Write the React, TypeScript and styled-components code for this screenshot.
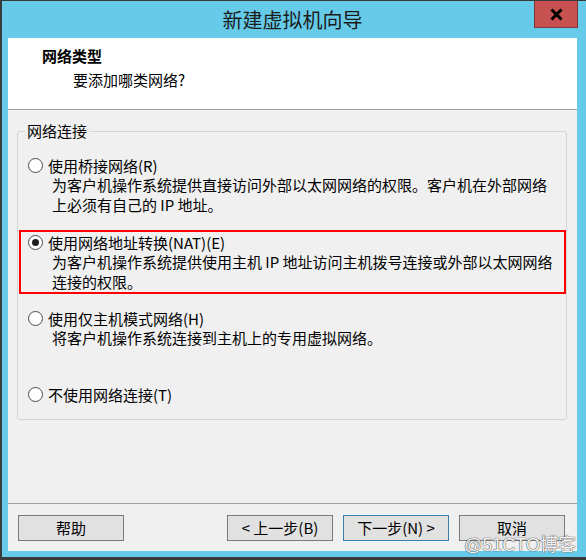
import styled, { createGlobalStyle } from 'styled-components';

const GlobalStyle = createGlobalStyle`
  html, body {
    margin: 0;
    padding: 0;
    background: #ffffff;
  }
  body {
    font-family: "Noto Sans CJK SC", "Microsoft YaHei", sans-serif;
  }
  * {
    box-sizing: border-box;
  }
`;

const Window = styled.div`
  position: relative;
  width: 586px;
  height: 560px;
  display: flex;
  flex-direction: column;
  background: #66cbe9;
  border-top: 1px solid #3a3a3a;
  border-left: 2px solid #3a3a3a;
  border-bottom: 3px solid #3a3a3a;
  padding: 0 9px 6px 6px;
`;

const TitleBar = styled.div`
  height: 37px;
  flex-shrink: 0;
  display: grid;
  grid-template-columns: 1fr auto 1fr;
  align-items: start;
`;

const Title = styled.div`
  grid-column: 2;
  font-size: 20px;
  line-height: 37px;
  color: #1b1b1b;
`;

const CloseButton = styled.div`
  grid-column: 3;
  justify-self: end;
  width: 44px;
  height: 27px;
  margin-right: -1px;
  display: flex;
  align-items: center;
  justify-content: center;
  background: #c75050;
  border: 1px solid #7a3a3a;
  border-top: none;
`;

const Client = styled.div`
  flex: 1;
  display: flex;
  flex-direction: column;
  background: #f0f0f0;
`;

const Header = styled.div`
  height: 72px;
  flex-shrink: 0;
  background: #ffffff;
  border-bottom: 1px solid #a0a0a0;
  padding: 8px 0 0 34px;
`;

const Heading = styled.div`
  font-size: 15px;
  line-height: 20px;
  font-weight: bold;
  color: #000;
`;

const SubHeading = styled.div`
  margin: 4px 0 0 31px;
  font-size: 15px;
  line-height: 20px;
  color: #000;
`;

const Body = styled.div`
  flex: 1;
  padding: 11px 10px 0 9px;
`;

const GroupBox = styled.fieldset`
  margin: 0;
  padding: 0;
  min-width: 0;
  height: 299px;
  border: 1px solid #d5d5d5;
  border-radius: 3px;
`;

const Legend = styled.legend`
  margin-left: 7px;
  padding: 0 2px;
  font-size: 15px;
  line-height: 20px;
  color: #000;
`;

const OptionList = styled.div`
  display: flex;
  flex-direction: column;
  padding-top: 12px;
`;

const Option = styled.div<{ $highlight?: boolean; $space: number }>`
  margin: ${(p) => p.$space}px 0 0 1px;
  border: 2px solid ${(p) => (p.$highlight ? '#ff0000' : 'transparent')};
  padding-left: 7px;
`;

const OptionRow = styled.div`
  display: flex;
  align-items: center;
  gap: 5px;
  height: 20px;
  font-size: 15px;
  color: #000;
`;

const Radio = styled.span<{ $checked?: boolean }>`
  width: 15px;
  height: 15px;
  border-radius: 50%;
  border: 1px solid #4a4a4a;
  background: #fff;
  display: flex;
  align-items: center;
  justify-content: center;
  &::after {
    content: '';
    width: 7px;
    height: 7px;
    border-radius: 50%;
    background: ${(p) => (p.$checked ? '#1e1e1e' : 'transparent')};
  }
`;

const Desc = styled.div`
  padding-left: 24px;
  font-size: 15px;
  line-height: 20px;
  color: #000;
  white-space: nowrap;
`;

const Footer = styled.div`
  height: 48px;
  flex-shrink: 0;
  display: flex;
  align-items: flex-start;
  border-top: 1px solid #a0a0a0;
  padding: 11px 12px 0 10px;
`;

const NavGroup = styled.div`
  margin-left: auto;
  display: flex;
  gap: 10px;
`;

const Button = styled.button<{ $default?: boolean }>`
  width: 106px;
  height: 26px;
  padding: 0;
  background: #e1e1e1;
  border: 1px solid ${(p) => (p.$default ? '#3c7fb1' : '#7a7a7a')};
  font-family: inherit;
  font-size: 15px;
  line-height: 22px;
  color: #000;
`;

const Watermark = styled.div`
  position: absolute;
  right: 10px;
  bottom: 1px;
  font-family: "Liberation Sans", "Noto Sans CJK SC", sans-serif;
  font-size: 18px;
  line-height: 22px;
  color: #f4f4f4;
  text-shadow: 0 0 1px #444, 0 0 1px #444;
  pointer-events: none;
`;

const options = [
  {
    label: '使用桥接网络(R)',
    lines: [
      '为客户机操作系统提供直接访问外部以太网网络的权限。客户机在外部网络',
      '上必须有自己的 IP 地址。',
    ],
    space: 0,
  },
  {
    label: '使用网络地址转换(NAT)(E)',
    lines: [
      '为客户机操作系统提供使用主机 IP 地址访问主机拨号连接或外部以太网网络',
      '连接的权限。',
    ],
    space: 13,
    checked: true,
  },
  {
    label: '使用仅主机模式网络(H)',
    lines: ['将客户机操作系统连接到主机上的专用虚拟网络。'],
    space: 12,
  },
  { label: '不使用网络连接(T)', lines: [], space: 32 },
];

const App = () => {
  return (
    <>
      <GlobalStyle />
      <Window>
        <TitleBar>
          <Title>新建虚拟机向导</Title>
          <CloseButton>
            <svg width='13' height='13' viewBox='0 0 13 13'>
              <path d='M1.5 1.5 L11.5 11.5 M11.5 1.5 L1.5 11.5' stroke='#000' strokeWidth='3' />
            </svg>
          </CloseButton>
        </TitleBar>
        <Client>
          <Header>
            <Heading>网络类型</Heading>
            <SubHeading>要添加哪类网络?</SubHeading>
          </Header>
          <Body>
            <GroupBox>
              <Legend>网络连接</Legend>
              <OptionList>
                {options.map((o) => (
                  <Option key={o.label} $highlight={o.checked} $space={o.space}>
                    <OptionRow>
                      <Radio $checked={o.checked} />
                      {o.label}
                    </OptionRow>
                    {o.lines.map((line) => (
                      <Desc key={line}>{line}</Desc>
                    ))}
                  </Option>
                ))}
              </OptionList>
            </GroupBox>
          </Body>
          <Footer>
            <Button>帮助</Button>
            <NavGroup>
              <Button>&lt; 上一步(B)</Button>
              <Button $default>下一步(N) &gt;</Button>
              <Button>取消</Button>
            </NavGroup>
          </Footer>
        </Client>
        <Watermark>@51CTO博客</Watermark>
      </Window>
    </>
  );
};

export default App;
